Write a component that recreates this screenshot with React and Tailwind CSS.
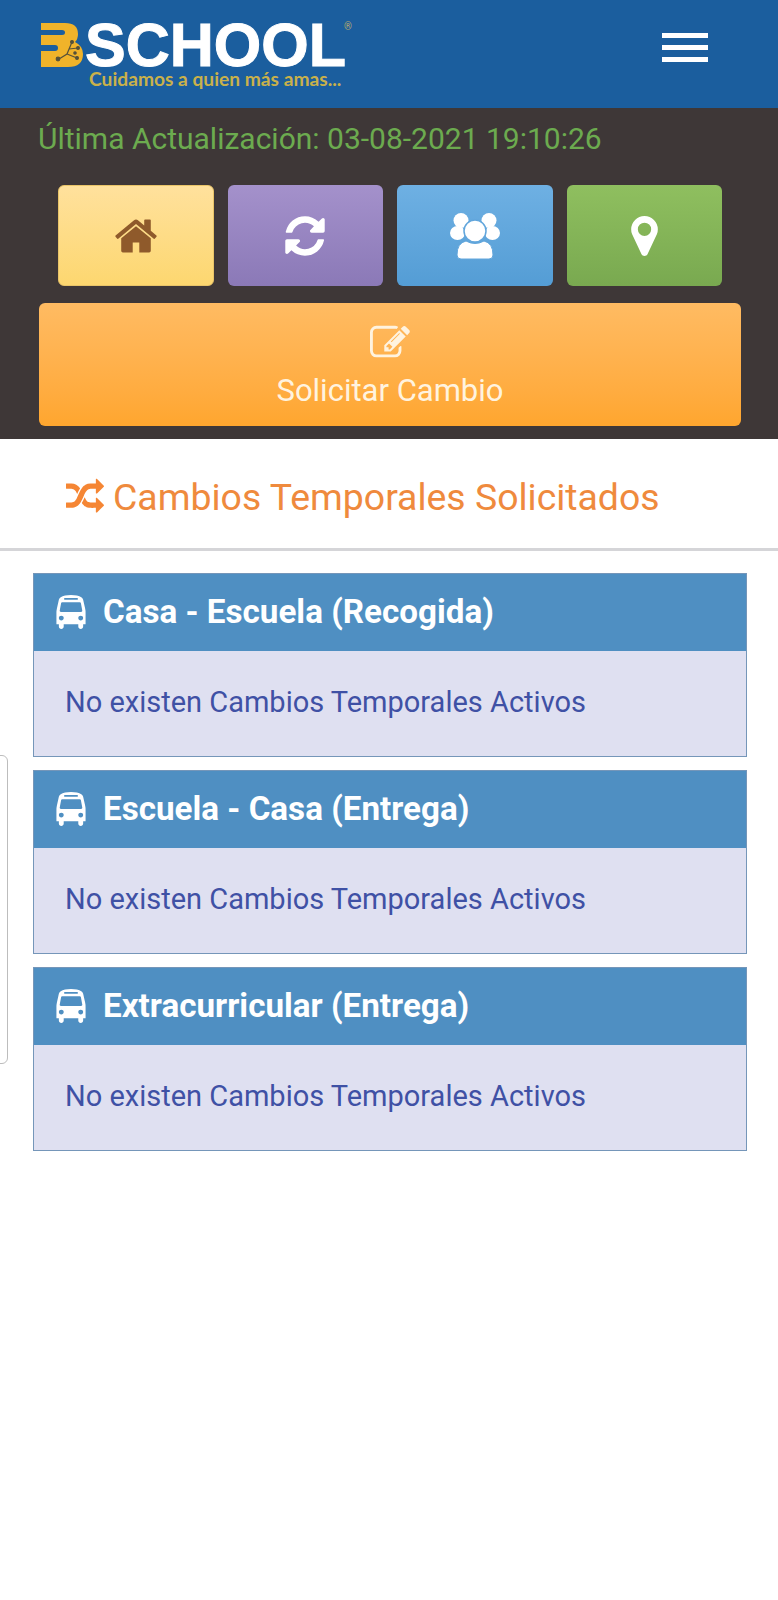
import React from "react";

const roboto = "font-['Roboto',sans-serif]";

function HomeIcon() {
  return (
    <svg viewBox="0 0 1792 1792" className="w-[46px] h-[46px] fill-[#8f5a2b]">
      <path d="M1472 992v480q0 26-19 45t-45 19h-384v-384h-256v384h-384q-26 0-45-19t-19-45v-480q0-1 .5-3t.5-3l575-474 575 474q1 2 1 6zm223-69l-62 74q-8 9-21 11h-3q-13 0-21-7l-692-577-692 577q-12 8-24 7-13-2-21-11l-62-74q-8-10-7-23.5t11-21.5l719-599q32-26 76-26t76 26l244 204v-195q0-14 9-23t23-9h192q14 0 23 9t9 23v408l219 182q10 8 11 21.5t-7 23.5z" />
    </svg>
  );
}

function RefreshIcon() {
  return (
    <svg viewBox="0 0 1792 1792" className="w-[46px] h-[46px] fill-white">
      <path d="M1639 1056q0 5-1 7-64 268-268 434.5t-478 166.5q-146 0-282.5-55t-243.5-157l-129 129q-19 19-45 19t-45-19-19-45v-448q0-26 19-45t45-19h448q26 0 45 19t19 45-19 45l-137 137q71 66 161 102t187 36q134 0 250-65t186-179q11-17 53-117 8-23 30-23h192q13 0 22.5 9.5t9.5 22.5zm25-800v448q0 26-19 45t-45 19h-448q-26 0-45-19t-19-45 19-45l138-138q-148-137-349-137-134 0-250 65t-186 179q-11 17-53 117-8 23-30 23h-199q-13 0-22.5-9.5t-9.5-22.5v-7q65-268 270-434.5t480-166.5q146 0 284 55.5t245 156.5l130-129q19-19 45-19t45 19 19 45z" />
    </svg>
  );
}

function UsersIcon() {
  return (
    <svg viewBox="0 0 50 48" className="w-[50px] h-[48px]">
      <circle cx="11" cy="8.5" r="7.5" fill="#fff" />
      <circle cx="39" cy="8.5" r="7.5" fill="#fff" />
      <ellipse cx="7.5" cy="21" rx="7.5" ry="7" fill="#fff" />
      <ellipse cx="42.5" cy="21" rx="7.5" ry="7" fill="#fff" />
      <circle cx="25" cy="19" r="11" fill="#fff" stroke="#62a6dc" strokeWidth="1.5" />
      <path d="M7 43 Q7 31 16 29 Q25 34 34 29 Q43 31 43 43 Q43 47 39 47 H11 Q7 47 7 43 Z" fill="#fff" stroke="#62a6dc" strokeWidth="1" />
    </svg>
  );
}

function MarkerIcon() {
  return (
    <svg viewBox="0 128 1024 1536" className="w-[27px] h-[40px] fill-white">
      <path d="M768 640q0-106-75-181t-181-75-181 75-75 181 75 181 181 75 181-75 75-181zm256 0q0 109-33 179l-364 774q-16 33-47.5 52t-67.5 19-67.5-19-46.5-52l-365-774q-33-70-33-179 0-212 150-362t362-150 362 150 150 362z" />
    </svg>
  );
}

function EditIcon() {
  return (
    <svg viewBox="0 0 1792 1792" className="w-[40px] h-[40px] fill-[#fff3df]">
      <path d="M888 1184l116-116-152-152-116 116v56h96v96h56zm440-720q-16-16-33 1l-350 350q-17 17-1 33t33-1l350-350q17-17 1-33zm80 594v190q0 119-84.5 203.5t-203.5 84.5h-832q-119 0-203.5-84.5t-84.5-203.5v-832q0-119 84.5-203.5t203.5-84.5h832q63 0 117 25 15 7 18 23 3 17-9 29l-49 49q-14 14-32 8-23-6-45-6h-832q-66 0-113 47t-47 113v832q0 66 47 113t113 47h832q66 0 113-47t47-113v-126q0-13 9-22l64-64q15-15 35-7t20 29zm-96-738l288 288-672 672h-288v-288zm444 132l-92 92-288-288 92-92q28-28 68-28t68 28l152 152q28 28 28 68t-28 68z" />
    </svg>
  );
}

function RandomIcon() {
  return (
    <svg viewBox="0 0 1792 1792" className="w-[38px] h-[38px] fill-[#f58634]">
      <path d="M666 481q-60 92-137 273-22-45-37-72.5t-40.5-63.5-51-56.5-63-35-81.5-14.5h-224q-14 0-23-9t-9-23v-192q0-14 9-23t23-9h224q250 0 410 225zm1126 799q0 14-9 23l-320 320q-9 9-23 9-13 0-22.5-9.5t-9.5-22.5v-192q-32 0-85 .5t-81 1-73-1-71-5-64-10.5-63-18.5-58-28.5-59-40-55-53.5-56-69.5q59-93 136-273 22 45 37 72.5t40.5 63.5 51 56.5 63 35 81.5 14.5h256v-192q0-14 9-23t23-9q12 0 24 10l319 319q9 9 9 23zm0-896q0 14-9 23l-320 320q-9 9-23 9-13 0-22.5-9.5t-9.5-22.5v-192h-256q-48 0-87 15t-69 45-51 61.5-45 77.5q-32 62-78 171-29 66-49.5 111t-54 105-64 100-74 83-90 68.5-106.5 42-128 16.5h-224q-14 0-23-9t-9-23v-192q0-14 9-23t23-9h224q48 0 87-15t69-45 51-61.5 45-77.5q32-62 78-171 29-66 49.5-111t54-105 64-100 74-83 90-68.5 106.5-42 128-16.5h256v-192q0-14 9-23t23-9q12 0 24 10l319 319q9 9 9 23z" />
    </svg>
  );
}

function BusIcon() {
  return (
    <svg viewBox="0 0 1792 1792" className="w-[34px] h-[34px] fill-white shrink-0">
      <path d="M512 1216q0-53-37.5-90.5t-90.5-37.5-90.5 37.5-37.5 90.5 37.5 90.5 90.5 37.5 90.5-37.5 37.5-90.5zm1024 0q0-53-37.5-90.5t-90.5-37.5-90.5 37.5-37.5 90.5 37.5 90.5 90.5 37.5 90.5-37.5 37.5-90.5zm-46-396l-72-384q-5-23-22.5-37.5t-40.5-14.5h-918q-23 0-40.5 14.5t-22.5 37.5l-72 384q-5 30 14 53t49 23h1062q30 0 49-23t14-53zm-226-612q0-20-14-34t-34-14h-640q-20 0-34 14t-14 34 14 34 34 14h640q20 0 34-14t14-34zm400 725v603h-128v128q0 53-37.5 90.5t-90.5 37.5-90.5-37.5-37.5-90.5v-128h-768v128q0 53-37.5 90.5t-90.5 37.5-90.5-37.5-37.5-90.5v-128h-128v-603q0-112 25-223l103-454q9-78 97.5-137t230-89 312.5-30 312.5 30 230 89 97.5 137l105 454q23 102 23 223z" />
    </svg>
  );
}

function LogoMark() {
  return (
    <svg viewBox="0 0 42 44" className="w-[42px] h-[44px] shrink-0">
      <path d="M0 0H24Q37 0 37 11Q37 16 34 19Q42 23 42 31Q42 44 27 44H0V30H0Z" fill="#f0b32a" />
      <path d="M0 7H21Q24 7 24 9.5Q24 12 21 12H0Z" fill="#1b5e9e" />
      <path d="M0 22H14Q17 22 17 25Q17 28 14 28H0Z" fill="#1b5e9e" />
      <g stroke="#55513a" strokeWidth="1.2" fill="#55513a">
        <path d="M18 36L26 31L31 19M26 31L36 35M28 26L37 25" fill="none" />
        <circle cx="17" cy="36" r="1.8" />
        <circle cx="31" cy="19" r="1.4" />
        <circle cx="37" cy="25" r="1.4" />
        <circle cx="36" cy="35" r="1.4" />
        <circle cx="34" cy="30" r="1.2" />
      </g>
    </svg>
  );
}

function QuickButton({ className, children }) {
  return (
    <button className={`w-[155.5px] h-[101px] rounded-md flex items-center justify-center ${className}`}>
      {children}
    </button>
  );
}

function RouteCard({ title }) {
  return (
    <section className="border border-[#7596b9] bg-[#dfe0f1]">
      <div className="h-[77px] bg-[#4f8fc2] flex items-center pl-[20px] pb-[2px] gap-[15px]">
        <BusIcon />
        <h2 className="text-[33.2px] font-bold text-white leading-none">{title}</h2>
      </div>
      <p className="h-[105px] flex items-center pl-[31px] pb-[2px] text-[29px] text-[#3f51a5]">
        No existen Cambios Temporales Activos
      </p>
    </section>
  );
}

export default function App() {
  return (
    <div className={`relative h-[1600px] bg-white overflow-hidden ${roboto}`}>
      <header className="h-[108px] bg-[#1b5e9e] flex justify-between pl-[41px] pr-[70px] pt-[23px]">
        <div className="flex items-start">
          <LogoMark />
          <div className="relative ml-[2px]">
            <div className="font-['Liberation_Sans',sans-serif] font-bold text-[61px] leading-[44px] text-white [-webkit-text-stroke:1px_white]">
              SCHOOL
            </div>
            <div className="font-['Lato',sans-serif] font-bold text-[19.2px] leading-[22px] pl-[4px] mt-[1px] text-[#c9b14b] whitespace-nowrap">
              Cuidamos a quien más amas...
            </div>
            <span className="absolute left-[259px] top-[-4px] text-[10px] text-[#b7a96f]">®</span>
          </div>
        </div>
        <button className="w-[46px] flex flex-col gap-[7.5px] mt-[10px]">
          <span className="block h-[4.5px] bg-white" />
          <span className="block h-[4.5px] bg-white" />
          <span className="block h-[4.5px] bg-white" />
        </button>
      </header>

      <div className="h-[331px] bg-[#3e3737] pl-[38px] pr-[37px]">
        <p className="h-[62px] pt-[10px] text-[30px] leading-[42px] text-[#6cab4f] whitespace-nowrap">
          Última Actualización: 03-08-2021 19:10:26
        </p>
        <div className="flex gap-[14px] mt-[15px] pl-[20px]">
          <QuickButton className="bg-gradient-to-b from-[#ffe19c] to-[#fdd76f] border border-[#e9c468]">
            <HomeIcon />
          </QuickButton>
          <QuickButton className="bg-gradient-to-b from-[#a491cb] to-[#8b79b7]">
            <RefreshIcon />
          </QuickButton>
          <QuickButton className="bg-gradient-to-b from-[#6eb0e3] to-[#549dd5]">
            <UsersIcon />
          </QuickButton>
          <QuickButton className="bg-gradient-to-b from-[#8fbf5f] to-[#79a950]">
            <MarkerIcon />
          </QuickButton>
        </div>
        <button className="w-[702px] h-[123px] ml-[1px] mt-[17px] rounded-md bg-gradient-to-b from-[#ffbb62] to-[#ffa62e] flex flex-col items-center pt-[20px] text-white">
          <EditIcon />
          <span className="text-[31px] leading-[44px] mt-[6px] text-[#fff3df]">Solicitar Cambio</span>
        </button>
      </div>

      <div className="h-[112px] flex items-center pl-[66px] pt-[6px] gap-[9px] border-b-[3px] border-[#d5d5d8]">
        <RandomIcon />
        <h1 className="text-[37.4px] text-[#ef8a3d] leading-none pt-[3px]">Cambios Temporales Solicitados</h1>
      </div>

      <main className="pl-[33px] pr-[31px] pt-[22px] flex flex-col gap-[13px]">
        <RouteCard title="Casa - Escuela (Recogida)" />
        <RouteCard title="Escuela - Casa (Entrega)" />
        <RouteCard title="Extracurricular (Entrega)" />
      </main>

      <div className="absolute left-[-10px] top-[755px] w-[18px] h-[309px] bg-white border border-[#bdbdbd] rounded-md" />
    </div>
  );
}
